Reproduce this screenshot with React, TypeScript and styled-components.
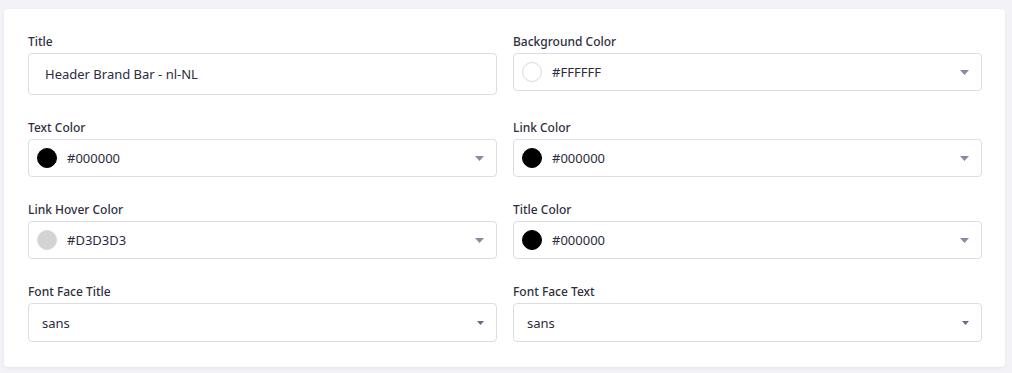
import styled, { createGlobalStyle } from 'styled-components';

const GlobalStyle = createGlobalStyle`
  html, body {
    margin: 0;
    padding: 0;
    background: #f3f3f7;
  }
  body {
    font-family: 'Noto Sans', 'Open Sans', Arial, sans-serif;
    color: #2c2c3c;
  }
`;

const Page = styled.div`
  padding: 9px 7px 6px 4px;
`;

const Card = styled.div`
  background: #fff;
  border-radius: 4px;
  box-shadow: 0 1px 3px rgba(40, 40, 80, 0.08);
  padding: 25px 23px 25px 24px;
  display: grid;
  grid-template-columns: 1fr 1fr;
  column-gap: 16px;
  row-gap: 25px;
`;

const Field = styled.div`
  display: flex;
  flex-direction: column;
`;

const Label = styled.label`
  font-size: 12px;
  line-height: 16px;
  font-weight: 500;
  color: #2f2f40;
  margin-bottom: 3px;
`;

const Box = styled.div<{ $height: number; $pad: number }>`
  box-sizing: border-box;
  height: ${(p) => p.$height}px;
  border: 1px solid #dcdce6;
  border-radius: 4px;
  display: flex;
  align-items: center;
  padding: 0 12px 0 ${(p) => p.$pad}px;
  gap: 10px;
  font-size: 13px;
  color: #2c2c3c;
`;

const Value = styled.span`
  flex: 1;
`;

const Swatch = styled.span<{ $color: string }>`
  width: 20px;
  height: 20px;
  border-radius: 50%;
  background: ${(p) => p.$color};
  box-sizing: border-box;
  border: 1px solid ${(p) => (p.$color === '#000000' ? '#000' : '#d8d8de')};
  flex-shrink: 0;
`;

const Caret = ({ small }: { small?: boolean }) => (
  <svg width={small ? 7 : 9} height={small ? 4 : 5} viewBox="0 0 9 5">
    <path d="M0 0h9L4.5 5z" fill={small ? '#6a6a84' : '#8a8aa6'} />
  </svg>
);

const colors = [
  { label: 'Text Color', value: '#000000' },
  { label: 'Link Color', value: '#000000' },
  { label: 'Link Hover Color', value: '#D3D3D3' },
  { label: 'Title Color', value: '#000000' },
];

const ColorField = ({ label, value }: { label: string; value: string }) => (
  <Field>
    <Label>{label}</Label>
    <Box $height={38} $pad={8}>
      <Swatch $color={value} />
      <Value>{value}</Value>
      <Caret />
    </Box>
  </Field>
);

const FontField = ({ label }: { label: string }) => (
  <Field>
    <Label>{label}</Label>
    <Box $height={39} $pad={13}>
      <Value>sans</Value>
      <Caret small />
    </Box>
  </Field>
);

export default function App() {
  return (
    <>
      <GlobalStyle />
      <Page>
        <Card>
          <Field>
            <Label>Title</Label>
            <Box $height={42} $pad={16}>
              <Value>Header Brand Bar - nl-NL</Value>
            </Box>
          </Field>
          <Field>
            <Label>Background Color</Label>
            <Box $height={38} $pad={8}>
              <Swatch $color="#FFFFFF" />
              <Value>#FFFFFF</Value>
              <Caret />
            </Box>
          </Field>
          {colors.map((c) => (
            <ColorField key={c.label} label={c.label} value={c.value} />
          ))}
          <FontField label="Font Face Title" />
          <FontField label="Font Face Text" />
        </Card>
      </Page>
    </>
  );
}
